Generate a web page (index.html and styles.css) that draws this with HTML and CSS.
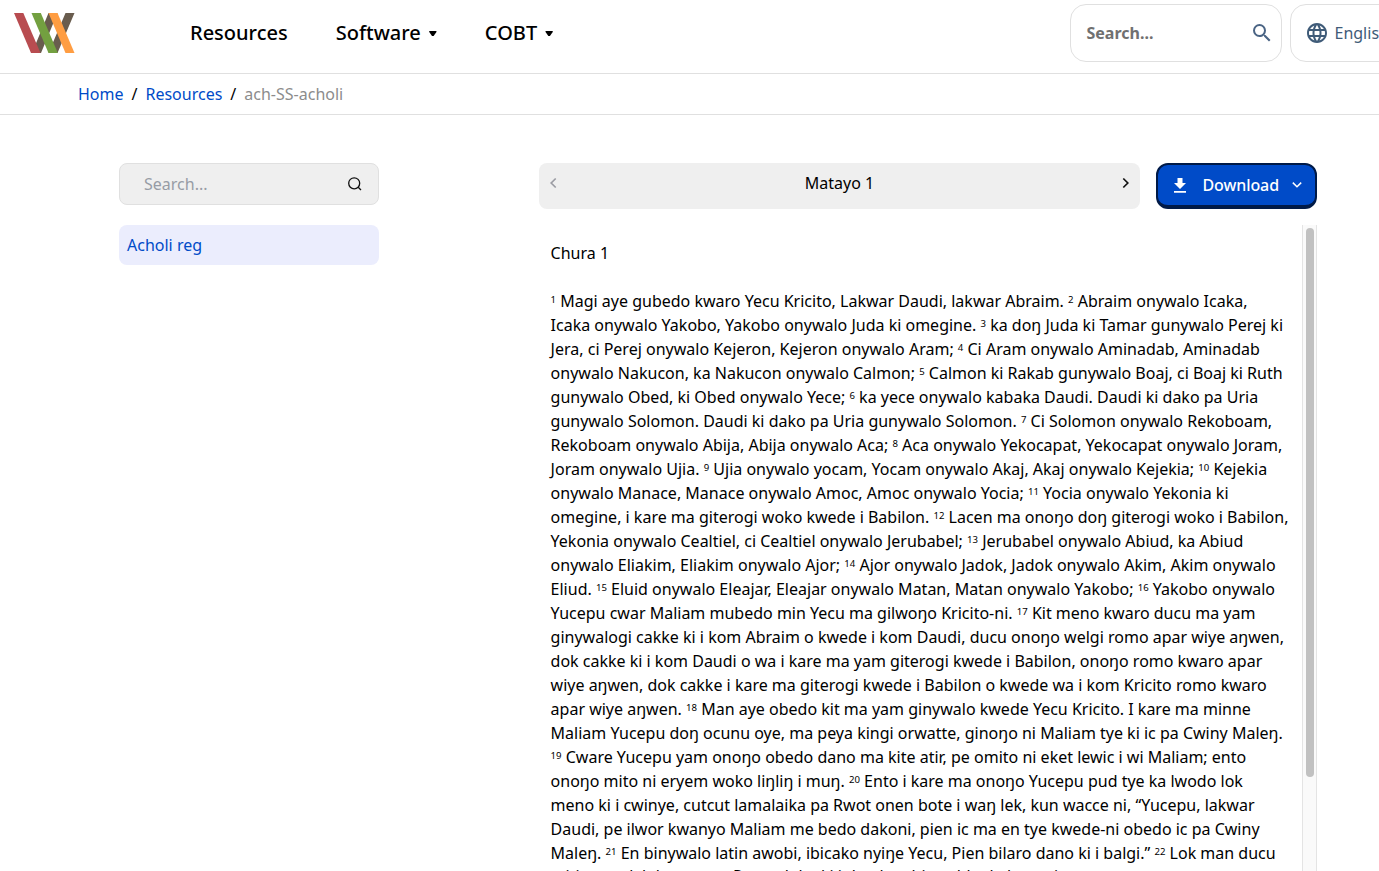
FILE: index.html
```html
<!DOCTYPE html>
<html lang="en">
<head>
<meta charset="utf-8">
<title>Acholi reg</title>
<link rel="stylesheet" href="styles.css">
</head>
<body>
<header class="topbar">
  <svg class="logo" width="62" height="42" viewBox="0 0 62 42">
    <path d="M34.500 1h9L27 41h-9zM51.500 1h9L43.500 41h-9z" fill="#695c4e"/>
    <path d="M0 1h9.300l17.200 40H17z" fill="#b84c50"/>
    <path d="M17.500 1h9.300l17 40h-9.300z" fill="#73a040"/>
    <path d="M34.500 1h9l17 40h-9z" fill="#ff9d42"/>
  </svg>
  <nav class="nav">
    <a>Resources</a>
    <a>Software<i class="caret"></i></a>
    <a>COBT<i class="caret"></i></a>
  </nav>
  <div class="pill site-search"><span>Search...</span>
    <svg width="24" height="24" viewBox="0 0 24 24" fill="#4a6484"><path d="M15.5 14h-.79l-.28-.27A6.471 6.471 0 0 0 16 9.5 6.5 6.5 0 1 0 9.500 16c1.610 0 3.090-.59 4.230-1.570l.27.28v.79l5 4.990L20.490 19l-4.990-5zm-6 0C7.010 14 5 11.990 5 9.500S7.010 5 9.500 5 14 7.010 14 9.500 11.990 14 9.500 14z"/></svg>
  </div>
  <div class="pill language">
    <svg width="24" height="24" viewBox="0 0 24 24" fill="#3f5b78"><path d="M11.990 2C6.470 2 2 6.480 2 12s4.470 10 9.990 10C17.520 22 22 17.520 22 12S17.520 2 11.990 2zm6.930 6h-2.950a15.650 15.650 0 0 0-1.380-3.560A8.030 8.030 0 0 1 18.920 8zM12 4.040c.83 1.200 1.480 2.530 1.910 3.960h-3.820c.43-1.430 1.080-2.760 1.910-3.960zM4.260 14C4.100 13.360 4 12.690 4 12s.1-1.360.26-2h3.380c-.08.66-.14 1.320-.14 2s.06 1.340.14 2H4.260zm.82 2h2.950c.32 1.250.78 2.450 1.380 3.560A7.987 7.987 0 0 1 5.080 16zm2.950-8H5.080a7.987 7.987 0 0 1 4.330-3.560A15.650 15.650 0 0 0 8.030 8zM12 19.960c-.83-1.200-1.480-2.530-1.910-3.960h3.820c-.43 1.430-1.080 2.760-1.910 3.960zM14.340 14H9.660c-.09-.66-.16-1.320-.16-2s.07-1.350.16-2h4.680c.09.65.16 1.320.16 2s-.07 1.340-.16 2zm.25 5.560c.6-1.110 1.060-2.310 1.380-3.560h2.950a8.030 8.030 0 0 1-4.330 3.560zM16.360 14c.08-.66.14-1.320.14-2s-.06-1.340-.14-2h3.380c.16.64.26 1.310.26 2s-.1 1.360-.26 2h-3.380z"/></svg>
    <span>English</span>
  </div>
</header>
<div class="breadcrumb"><a>Home</a><b>/</b><a>Resources</a><b>/</b><span>ach-SS-acholi</span></div>
<main class="main">
  <aside class="sidebar">
    <div class="filter"><span>Search...</span>
      <svg width="16" height="16" viewBox="0 0 16 16" fill="none" stroke="#111" stroke-width="1.300"><circle cx="7.200" cy="7.300" r="5.500"/><path d="M11.200 11.200L14 14"/></svg>
    </div>
    <a class="entry">Acholi reg</a>
  </aside>
  <section class="reader">
    <div class="controls">
      <div class="chapter">
        <svg width="8" height="12" viewBox="0 0 8 12" fill="none" stroke="#9b9ca3" stroke-width="1.700"><path d="M6.700 1.500L2.200 6l4.500 4.500"/></svg>
        <span>Matayo 1</span>
        <svg width="8" height="12" viewBox="0 0 8 12" fill="none" stroke="#111" stroke-width="1.700"><path d="M1.300 1.500L5.800 6l-4.500 4.500"/></svg>
      </div>
      <button class="download">
        <svg width="12" height="15" viewBox="0 0 12 15" fill="#fff"><path d="M3.500 0h5v5H12l-6 6-6-6h3.500zM0 13h12v1.700H0z"/></svg>
        <span>Download</span>
        <svg width="10" height="6" viewBox="0 0 10 6" fill="none" stroke="#fff" stroke-width="1.500"><path d="M.8.6L5 4.800 9.200.6"/></svg>
      </button>
    </div>
    <div class="page">
      <div class="text">
        <h1>Chura 1</h1>
        <p><sup>1</sup> Magi aye gubedo kwaro Yecu Kricito, Lakwar Daudi, lakwar Abraim. <sup>2</sup> Abraim onywalo Icaka,<br>
Icaka onywalo Yakobo, Yakobo onywalo Juda ki omegine. <sup>3</sup> ka doŋ Juda ki Tamar gunywalo Perej ki<br>
Jera, ci Perej onywalo Kejeron, Kejeron onywalo Aram; <sup>4</sup> Ci Aram onywalo Aminadab, Aminadab<br>
onywalo Nakucon, ka Nakucon onywalo Calmon; <sup>5</sup> Calmon ki Rakab gunywalo Boaj, ci Boaj ki Ruth<br>
gunywalo Obed, ki Obed onywalo Yece; <sup>6</sup> ka yece onywalo kabaka Daudi. Daudi ki dako pa Uria<br>
gunywalo Solomon. Daudi ki dako pa Uria gunywalo Solomon. <sup>7</sup> Ci Solomon onywalo Rekoboam,<br>
Rekoboam onywalo Abija, Abija onywalo Aca; <sup>8</sup> Aca onywalo Yekocapat, Yekocapat onywalo Joram,<br>
Joram onywalo Ujia. <sup>9</sup> Ujia onywalo yocam, Yocam onywalo Akaj, Akaj onywalo Kejekia; <sup>10</sup> Kejekia<br>
onywalo Manace, Manace onywalo Amoc, Amoc onywalo Yocia; <sup>11</sup> Yocia onywalo Yekonia ki<br>
omegine, i kare ma giterogi woko kwede i Babilon. <sup>12</sup> Lacen ma onoŋo doŋ giterogi woko i Babilon,<br>
Yekonia onywalo Cealtiel, ci Cealtiel onywalo Jerubabel; <sup>13</sup> Jerubabel onywalo Abiud, ka Abiud<br>
onywalo Eliakim, Eliakim onywalo Ajor; <sup>14</sup> Ajor onywalo Jadok, Jadok onywalo Akim, Akim onywalo<br>
Eliud. <sup>15</sup> Eluid onywalo Eleajar, Eleajar onywalo Matan, Matan onywalo Yakobo; <sup>16</sup> Yakobo onywalo<br>
Yucepu cwar Maliam mubedo min Yecu ma gilwoŋo Kricito-ni. <sup>17</sup> Kit meno kwaro ducu ma yam<br>
ginywalogi cakke ki i kom Abraim o kwede i kom Daudi, ducu onoŋo welgi romo apar wiye aŋwen,<br>
dok cakke ki i kom Daudi o wa i kare ma yam giterogi kwede i Babilon, onoŋo romo kwaro apar<br>
wiye aŋwen, dok cakke i kare ma giterogi kwede i Babilon o kwede wa i kom Kricito romo kwaro<br>
apar wiye aŋwen. <sup>18</sup> Man aye obedo kit ma yam ginywalo kwede Yecu Kricito. I kare ma minne<br>
Maliam Yucepu doŋ ocunu oye, ma peya kingi orwatte, ginoŋo ni Maliam tye ki ic pa Cwiny Maleŋ.<br>
<sup>19</sup> Cware Yucepu yam onoŋo obedo dano ma kite atir, pe omito ni eket lewic i wi Maliam; ento<br>
onoŋo mito ni eryem woko liŋliŋ i muŋ. <sup>20</sup> Ento i kare ma onoŋo Yucepu pud tye ka lwodo lok<br>
meno ki i cwinye, cutcut lamalaika pa Rwot onen bote i waŋ lek, kun wacce ni, “Yucepu, lakwar<br>
Daudi, pe ilwor kwanyo Maliam me bedo dakoni, pien ic ma en tye kwede-ni obedo ic pa Cwiny<br>
Maleŋ. <sup>21</sup> En binywalo latin awobi, ibicako nyiŋe Yecu, Pien bilaro dano ki i balgi.” <sup>22</sup> Lok man ducu<br>
<span class="peek">mitime wek lok ma yam Rwot oloko ki i dog lanebi ocobbe kakare ni,</span></p>
      </div>
      <div class="scrollbar"><div class="thumb"></div></div>
    </div>
  </section>
</main>
</body>
</html>
```
FILE: styles.css
```css
* { box-sizing: border-box; }
body { margin: 0; height: 871px; overflow: hidden; font: 16px/24px "Noto Sans", sans-serif; color: #000; background: #fff; }
svg { display: block; flex: none; }
.topbar { height: 74px; width: 1440px; display: flex; align-items: flex-start; border-bottom: 1px solid #e0e0e0; padding: 4px 0 0 14px; }
.logo { margin-top: 8px; }
.nav { display: flex; gap: 48px; margin-left: 114px; width: 880px; padding-top: 14px; font-size: 20px; line-height: 30px; font-weight: 500; }
.nav a { display: flex; align-items: center; }
.caret { width: 8px; height: 5px; margin: 1px 0 0 8px; background: #000; clip-path: polygon(5% 0, 95% 0, 95% 20%, 60% 100%, 40% 100%, 5% 20%); }
.pill { height: 58px; flex: none; border: 1px solid #e0e0e0; border-radius: 16px; display: flex; align-items: center; }
.site-search { width: 212px; padding: 0 7px 0 15.500px; justify-content: space-between; font-weight: 700; color: #707070; }
.language { width: 140px; margin-left: 8px; padding-left: 14px; gap: 5.500px; color: #3f5b78; }
.breadcrumb { height: 41px; width: 1440px; border-bottom: 1px solid #e0e0e0; padding: 8px 0 0 78px; display: flex; }
.breadcrumb a { color: #004bc8; }
.breadcrumb b { font-weight: 400; margin: 0 8px; }
.breadcrumb span { color: #8c8c8c; }
.main { display: flex; padding: 48px 0 0 119px; gap: 160px; }
.sidebar { width: 260px; flex: none; }
.filter { height: 42px; border: 1px solid #e0e0e0; border-radius: 8px; background: #efefef; color: #979ca5; display: flex; align-items: center; justify-content: space-between; padding: 0 15px 0 24px; }
.entry { display: block; height: 40px; margin-top: 20px; padding: 8px; border-radius: 8px; background: #ebedfd; color: #004bc8; }
.reader { width: 778px; flex: none; }
.controls { display: flex; gap: 16px; height: 46px; }
.chapter { width: 601px; height: 46px; border-radius: 8px; background: #efefef; display: flex; justify-content: space-between; padding: 8px 10px; }
.chapter svg { margin-top: 6px; }
.download { width: 161px; height: 46px; border: 2px solid #001a47; border-bottom-width: 4px; border-radius: 12px; background: #004bc8; color: #fff; display: flex; align-items: center; padding: 0 0 0 16px; font: 500 16px/24px "Noto Sans", sans-serif; }
.download span { margin: 0 13px 0 16.500px; letter-spacing: -0.1px; }
.page { display: flex; margin-top: 16px; height: 646px; overflow: hidden; }
.text { width: 763px; padding: 16px 0 0 11.600px; white-space: nowrap; }
.text h1 { margin: 0 0 24px; font: inherit; }
.text p { margin: 0; }
.text sup { font-size: 9.600px; line-height: 0; vertical-align: baseline; position: relative; top: -4px; }
.peek { position: relative; top: -1px; }
.scrollbar { width: 15px; flex: none; border: solid #e4e4e4; border-width: 0 1px; background: #fafafa; padding: 3px 3px 0; }
.thumb { width: 8px; height: 549px; border-radius: 4px; background: #c1c1c1; }
```
